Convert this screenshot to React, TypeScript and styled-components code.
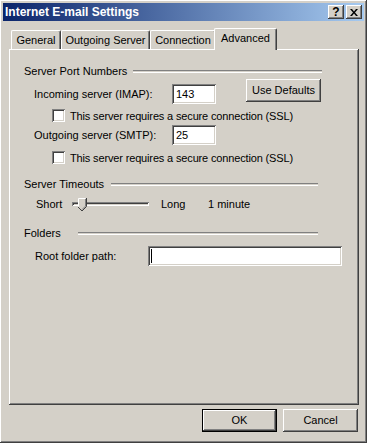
import React from "react";
import styled, { createGlobalStyle, css } from "styled-components";

const GlobalStyle = createGlobalStyle`
  html, body {
    margin: 0;
    padding: 0;
    background: #d4d0c8;
  }
  body {
    font-family: "Liberation Sans", Arial, sans-serif;
    font-size: 11px;
    color: #000;
  }
`;

const raised = css`
  box-shadow: inset -1px -1px #404040, inset 1px 1px #ffffff,
    inset -2px -2px #808080, inset 2px 2px #d4d0c8;
`;

const sunken = css`
  box-shadow: inset 1px 1px #808080, inset -1px -1px #ffffff,
    inset 2px 2px #404040, inset -2px -2px #d4d0c8;
`;

const Window = styled.div`
  width: 367px;
  height: 443px;
  box-sizing: border-box;
  padding: 3px;
  background: #d4d0c8;
  ${raised};
  display: flex;
  flex-direction: column;
`;

const TitleBar = styled.div`
  height: 18px;
  display: flex;
  align-items: center;
  padding: 0 2px;
  background: linear-gradient(to right, #0a246a, #a6caf0);
  color: #fff;
  font-weight: bold;
`;

const TitleText = styled.div`
  flex: 1;
  font-size: 12px;
`;

const TitleButton = styled.div`
  width: 16px;
  height: 14px;
  margin-left: ${(p: { first?: boolean }) => (p.first ? 0 : 2)}px;
  background: #d4d0c8;
  ${raised};
  color: #000;
  display: flex;
  align-items: center;
  justify-content: center;
  font-size: 12px;
  font-weight: bold;
  line-height: 14px;
`;

const TabStrip = styled.div`
  display: flex;
  align-items: flex-end;
  margin: 7px 0 0 6px;
  padding-left: 2px;
  height: 21px;
  position: relative;
  z-index: 1;
`;

const Tab = styled.div<{ w: number; active?: boolean }>`
  box-sizing: border-box;
  width: ${(p) => (p.active ? p.w + 4 : p.w)}px;
  height: ${(p) => (p.active ? 22 : 19)}px;
  margin: ${(p) => (p.active ? "0 -2px -1px -2px" : "0")};
  padding-top: 3px;
  text-align: center;
  background: #d4d0c8;
  border-top: 1px solid #fff;
  border-left: 1px solid #fff;
  border-right: 1px solid #404040;
  border-radius: 2px 2px 0 0;
  box-shadow: inset -1px 0 #808080;
  white-space: nowrap;
  position: relative;
  z-index: ${(p) => (p.active ? 2 : 0)};
`;

const Panel = styled.div`
  box-sizing: border-box;
  width: 350px;
  height: 356px;
  margin-left: 6px;
  padding: 15px 0 0 15px;
  background: #d4d0c8;
  box-shadow: inset -1px -1px #404040, inset 1px 1px #ffffff,
    inset -2px -2px #808080;
  display: flex;
  flex-direction: column;
`;

const GroupHeader = styled.div<{ to: number; top: number }>`
  display: flex;
  align-items: center;
  width: ${(p) => p.to}px;
  height: 14px;
  line-height: 14px;
  margin-top: ${(p) => p.top}px;
`;

const GroupLabel = styled.div<{ w: number }>`
  width: ${(p) => p.w}px;
  flex-shrink: 0;
  white-space: nowrap;
`;

const Etched = styled.div`
  flex: 1;
  height: 1px;
  border-top: 1px solid #808080;
  border-bottom: 1px solid #fff;
`;

const Row = styled.div<{ top: number; h: number; indent?: number }>`
  display: flex;
  align-items: flex-end;
  height: ${(p) => p.h}px;
  margin-top: ${(p) => p.top}px;
  margin-left: ${(p) => p.indent ?? 10}px;
`;

const Label = styled.div<{ w: number }>`
  width: ${(p) => p.w}px;
  height: 20px;
  line-height: 20px;
  white-space: nowrap;
`;

const Field = styled.div<{ w: number }>`
  box-sizing: border-box;
  width: ${(p) => p.w}px;
  height: 20px;
  padding: 0 4px;
  line-height: 20px;
  background: #fff;
  ${sunken};
  position: relative;
`;

const Caret = styled.span`
  position: absolute;
  left: 3px;
  top: 3px;
  width: 1px;
  height: 14px;
  background: #000;
`;

const TopAligned = styled.div`
  align-self: flex-start;
  margin-left: 30px;
`;

const Button = styled.div<{ w?: number; isDefault?: boolean }>`
  box-sizing: border-box;
  width: ${(p) => p.w ?? 75}px;
  height: 23px;
  line-height: 23px;
  text-align: center;
  background: #d4d0c8;
  ${(p) =>
    p.isDefault
      ? css`
          box-shadow: inset 0 0 0 1px #000, inset -2px -2px #404040,
            inset 2px 2px #ffffff, inset -3px -3px #808080;
        `
      : raised};
`;

const CheckRow = styled.div<{ top: number }>`
  display: flex;
  align-items: center;
  height: 13px;
  margin-top: ${(p) => p.top}px;
  margin-left: 28px;
  white-space: nowrap;
  letter-spacing: -0.15px;
`;

const CheckBox = styled.div`
  width: 13px;
  height: 13px;
  margin-right: 5px;
  background: #fff;
  ${sunken};
`;

const SliderRow = styled.div`
  display: flex;
  align-items: center;
  height: 16px;
  margin: 5px 0 0 12px;
`;

const SliderText = styled.div<{ w: number }>`
  width: ${(p) => p.w}px;
  white-space: nowrap;
`;

const Track = styled.div`
  position: relative;
  width: 77px;
  height: 4px;
  margin-right: 12px;
  background: #d4d0c8;
  box-shadow: inset 1px 1px #808080, inset -1px -1px #ffffff,
    inset 2px 2px #404040;
`;

const Thumb = styled.svg`
  position: absolute;
  left: 6px;
  top: -4px;
`;

const Footer = styled.div`
  display: flex;
  justify-content: flex-end;
  gap: 6px;
  margin: 4px 6px 0 0;
`;

const tabs = [
  { name: "General", w: 50 },
  { name: "Outgoing Server", w: 89 },
  { name: "Connection", w: 66 },
  { name: "Advanced", w: 59, active: true },
];

export default function App() {
  return (
    <>
      <GlobalStyle />
      <Window>
        <TitleBar>
          <TitleText>Internet E-mail Settings</TitleText>
          <TitleButton first>?</TitleButton>
          <TitleButton>
            <svg width="8" height="7" viewBox="0 0 8 7">
              <path d="M0 0h2l2 2.5L6 0h2L5 3.5 8 7H6L4 4.5 2 7H0l3-3.5z" fill="#000" />
            </svg>
          </TitleButton>
        </TitleBar>

        <TabStrip>
          {tabs.map((t) => (
            <Tab key={t.name} w={t.w} active={t.active}>
              {t.name}
            </Tab>
          ))}
        </TabStrip>

        <Panel>
          <GroupHeader to={298} top={0}>
            <GroupLabel w={109}>Server Port Numbers</GroupLabel>
            <Etched />
          </GroupHeader>

          <Row top={1} h={25}>
            <Label w={138}>Incoming server (IMAP):</Label>
            <Field w={44}>143</Field>
            <TopAligned>
              <Button>Use Defaults</Button>
            </TopAligned>
          </Row>
          <CheckRow top={5}>
            <CheckBox />
            This server requires a secure connection (SSL)
          </CheckRow>

          <Row top={3} h={20}>
            <Label w={138}>Outgoing server (SMTP):</Label>
            <Field w={44}>25</Field>
          </Row>
          <CheckRow top={6}>
            <CheckBox />
            This server requires a secure connection (SSL)
          </CheckRow>

          <GroupHeader to={294} top={13}>
            <GroupLabel w={87}>Server Timeouts</GroupLabel>
            <Etched />
          </GroupHeader>

          <SliderRow>
            <SliderText w={36}>Short</SliderText>
            <Track>
              <Thumb width="9" height="13" viewBox="0 0 9 13">
                <path d="M0.5 0.5h7v8l-3.5 3.5l-3.5-3.5z" fill="#d4d0c8" />
                <path d="M0.5 8.5v-8h7" stroke="#fff" fill="none" />
                <path d="M8.5 0v8.5l-4.5 4.5l-4-4" stroke="#404040" fill="none" />
                <path d="M7.5 1v7.1l-3.5 3.5" stroke="#808080" fill="none" />
              </Thumb>
            </Track>
            <SliderText w={47}>Long</SliderText>
            <SliderText w={60}>1 minute</SliderText>
          </SliderRow>

          <GroupHeader to={294} top={14}>
            <GroupLabel w={54}>Folders</GroupLabel>
            <Etched />
          </GroupHeader>

          <Row top={6} h={20} indent={11}>
            <Label w={113}>Root folder path:</Label>
            <Field w={194}>
              <Caret />
            </Field>
          </Row>
        </Panel>

        <Footer>
          <Button isDefault>OK</Button>
          <Button>Cancel</Button>
        </Footer>
      </Window>
    </>
  );
}
